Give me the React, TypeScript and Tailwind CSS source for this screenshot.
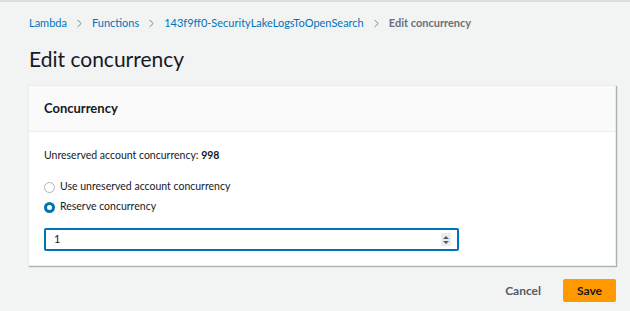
import { ChevronRight } from "lucide-react";

const font = { fontFamily: 'Lato, "Liberation Sans", sans-serif' };

function Radio({ checked, label }: { checked: boolean; label: string }) {
  return (
    <label className="flex items-center gap-[5px] h-[20px]">
      {checked ? (
        <span className="w-[11px] h-[11px] rounded-full bg-[#0073bb] flex items-center justify-center">
          <span className="w-[5px] h-[5px] rounded-full bg-white" />
        </span>
      ) : (
        <span className="w-[11px] h-[11px] rounded-full border border-[#aab7b8] bg-white" />
      )}
      <span className="text-[10.5px] text-[#16191f]">{label}</span>
    </label>
  );
}

export default function App() {
  return (
    <div style={font} className="w-[630px] h-[311px] bg-[#f2f3f3] border-t-2 border-[#dcdede] overflow-hidden">
      <nav className="flex items-center pl-[29px] pt-[13px] h-[29px] text-[11px]">
        <a className="text-[#0073bb]">Lambda</a>
        <ChevronRight size={13} className="mx-[6px] text-[#687078]" strokeWidth={1.6} />
        <a className="text-[#0073bb]">Functions</a>
        <ChevronRight size={13} className="mx-[6px] text-[#687078]" strokeWidth={1.6} />
        <a className="text-[#0073bb]">143f9ff0-SecurityLakeLogsToOpenSearch</a>
        <ChevronRight size={13} className="mx-[6px] text-[#687078]" strokeWidth={1.6} />
        <span className="font-bold text-[#687078]">Edit concurrency</span>
      </nav>

      <h1 className="pl-[29px] mt-[13px] text-[21px] leading-[30px] text-[#16191f]">Edit concurrency</h1>

      <section className="ml-[28px] mr-[14px] mt-[11px] bg-white border border-[#eaeded] shadow-[1px_1px_1px_0_rgba(0,28,36,0.3)]">
        <header className="h-[46px] bg-[#fafafa] border-b border-[#eaeded] flex items-center px-[15px]">
          <h2 className="text-[13px] font-bold text-[#16191f]">Concurrency</h2>
        </header>
        <div className="px-[15px] pt-[14px] pb-[14px]">
          <p className="text-[10.5px] leading-[18px] text-[#16191f]">
            Unreserved account concurrency: <span className="font-bold">998</span>
          </p>
          <div className="mt-[13px] flex flex-col">
            <Radio checked={false} label="Use unreserved account concurrency" />
            <Radio checked label="Reserve concurrency" />
          </div>
          <div className="mt-[11px] w-[415px] h-[23px] border-2 border-[#0073bb] rounded-[2px] flex items-center justify-between pl-[8px] pr-[6px]">
            <span className="text-[11px] text-[#16191f]">1</span>
            <span className="w-[10px] h-[13px] bg-[#eaeded] flex flex-col items-center justify-center gap-[2px]">
              <span className="w-0 h-0 border-l-[3px] border-r-[3px] border-b-[3px] border-l-transparent border-r-transparent border-b-[#545b64]" />
              <span className="w-0 h-0 border-l-[3px] border-r-[3px] border-t-[3px] border-l-transparent border-r-transparent border-t-[#545b64]" />
            </span>
          </div>
        </div>
      </section>

      <div className="flex justify-end items-center mr-[14px] mt-[13px] gap-[22px]">
        <button className="text-[12px] font-bold text-[#545b64]">Cancel</button>
        <button className="w-[53px] h-[23px] bg-[#ff9900] text-[12px] font-bold text-[#16191f] rounded-[2px]">Save</button>
      </div>
    </div>
  );
}
